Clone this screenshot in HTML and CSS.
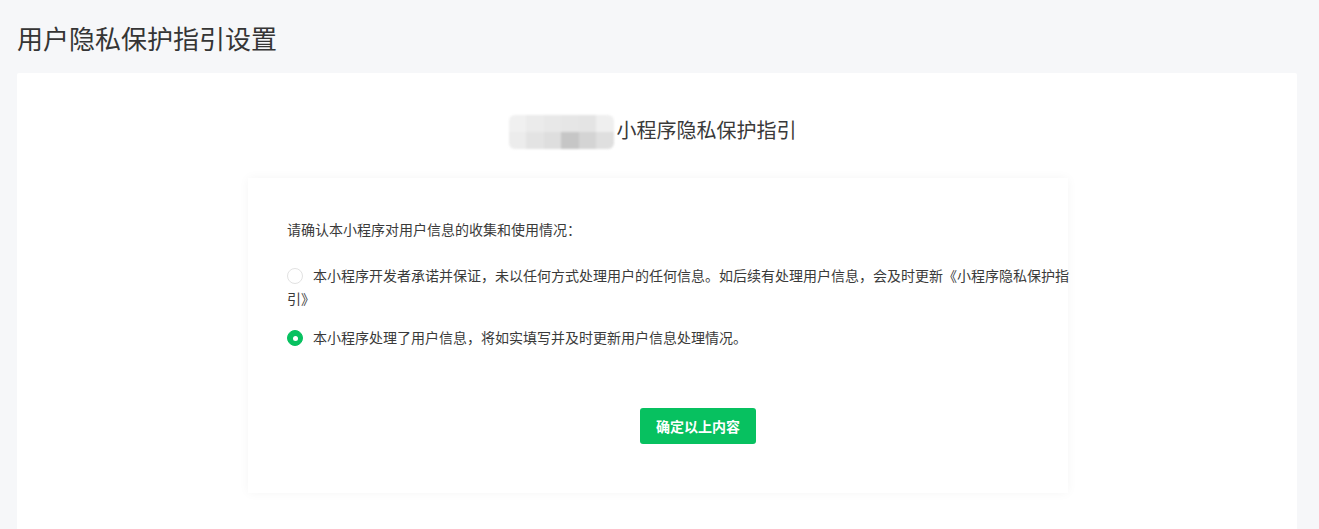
FILE: index.html
```html
<!DOCTYPE html>
<html lang="zh-CN">
<head>
<meta charset="utf-8">
<title>用户隐私保护指引设置</title>
<link rel="stylesheet" href="styles.css">
</head>
<body>
<div class="page">
  <h1 class="page-title">用户隐私保护指引设置</h1>
  <div class="card">
    <div class="subtitle">
      <div class="mosaic">
        <span></span><span></span><span></span><span></span><span></span><span></span>
        <span></span><span></span><span></span><span></span><span></span><span></span>
      </div>
      <span class="subtitle-text">小程序隐私保护指引</span>
    </div>
    <div class="panel">
      <div class="panel-inner">
        <p class="intro">请确认本小程序对用户信息的收集和使用情况：</p>
        <div class="options">
          <label class="option"><span class="radio"></span>本小程序开发者承诺并保证，未以任何方式处理用户的任何信息。如后续有处理用户信息，会及时更新《小程序隐私保护指引》</label>
          <label class="option option-checked"><span class="radio radio-on"></span>本小程序处理了用户信息，将如实填写并及时更新用户信息处理情况。</label>
        </div>
        <div class="actions">
          <button class="btn-primary">确定以上内容</button>
        </div>
      </div>
    </div>
  </div>
</div>
</body>
</html>
```
FILE: styles.css
```css
* { box-sizing: border-box; }
html, body {
  margin: 0;
  padding: 0;
  background: #f6f7f9;
  font-family: "Noto Sans CJK SC", "Noto Sans", "Liberation Sans", sans-serif;
  color: #353535;
}
.page {
  padding: 0 22px 0 17px;
  height: 529px;
  overflow: hidden;
}
.page-title {
  margin: 0;
  padding-top: 20px;
  font-size: 26px;
  line-height: 36px;
  font-weight: 400;
  color: #353535;
}
.card {
  margin-top: 17px;
  width: 1280px;
  height: 480px;
  background: #fff;
  border-radius: 2px;
  padding-top: 42px;
}
.subtitle {
  display: flex;
  justify-content: center;
  align-items: center;
  height: 30px;
  padding-right: 9px;
}
.mosaic {
  display: grid;
  grid-template-columns: repeat(6, 17.5px);
  grid-template-rows: 17px 17px;
  width: 105px;
  filter: blur(1.2px);
  border-radius: 6px;
  overflow: hidden;
  margin-top: 4px;
}
.mosaic span:nth-child(1) { background: #f0f0f0; }
.mosaic span:nth-child(2) { background: #ebebeb; }
.mosaic span:nth-child(3) { background: #e8e8e8; }
.mosaic span:nth-child(4) { background: #e6e6e6; }
.mosaic span:nth-child(5) { background: #e4e4e4; }
.mosaic span:nth-child(6) { background: #efefef; }
.mosaic span:nth-child(7) { background: #ececec; }
.mosaic span:nth-child(8) { background: #e3e3e3; }
.mosaic span:nth-child(9) { background: #dedede; }
.mosaic span:nth-child(10) { background: #c6c6c6; }
.mosaic span:nth-child(11) { background: #d4d4d4; }
.mosaic span:nth-child(12) { background: #dfdfdf; }
.subtitle-text {
  font-size: 20px;
  line-height: 30px;
  margin-left: 3px;
  color: #3a3a3a;
}
.panel {
  width: 820px;
  margin: 33px auto 0;
  position: relative;
  left: 1px;
  background: #fff;
  box-shadow: 0 0 10px rgba(0, 0, 0, 0.045);
  padding: 40px 0 49px 39px;
}
.panel-inner {
  width: 820px;
}
.intro {
  margin: 0;
  font-size: 14px;
  line-height: 23px;
  color: #3a3a3a;
}
.options {
  width: 790px;
  margin-top: 23px;
  display: flex;
  flex-direction: column;
  gap: 16px;
}
.option {
  display: block;
  font-size: 14px;
  line-height: 23px;
  color: #3a3a3a;
  cursor: pointer;
}
.radio {
  display: inline-block;
  width: 16px;
  height: 16px;
  border: 1px solid #e2e2e2;
  border-radius: 50%;
  vertical-align: -3px;
  margin-right: 10px;
  background: #fff;
  position: relative;
}
.radio-on {
  background: #07c160;
  border-color: #07c160;
}
.radio-on::after {
  content: "";
  position: absolute;
  left: 50%;
  top: 50%;
  width: 5px;
  height: 5px;
  margin: -2.5px 0 0 -2.5px;
  border-radius: 50%;
  background: #fff;
}
.actions {
  display: flex;
  justify-content: center;
  margin-top: 59px;
  padding-left: 2px;
}
.btn-primary {
  width: 116px;
  height: 36px;
  border: 0;
  border-radius: 3px;
  background: #07c160;
  color: #fff;
  font-family: inherit;
  font-size: 14px;
  font-weight: 700;
  padding: 0;
  cursor: pointer;
}
```
